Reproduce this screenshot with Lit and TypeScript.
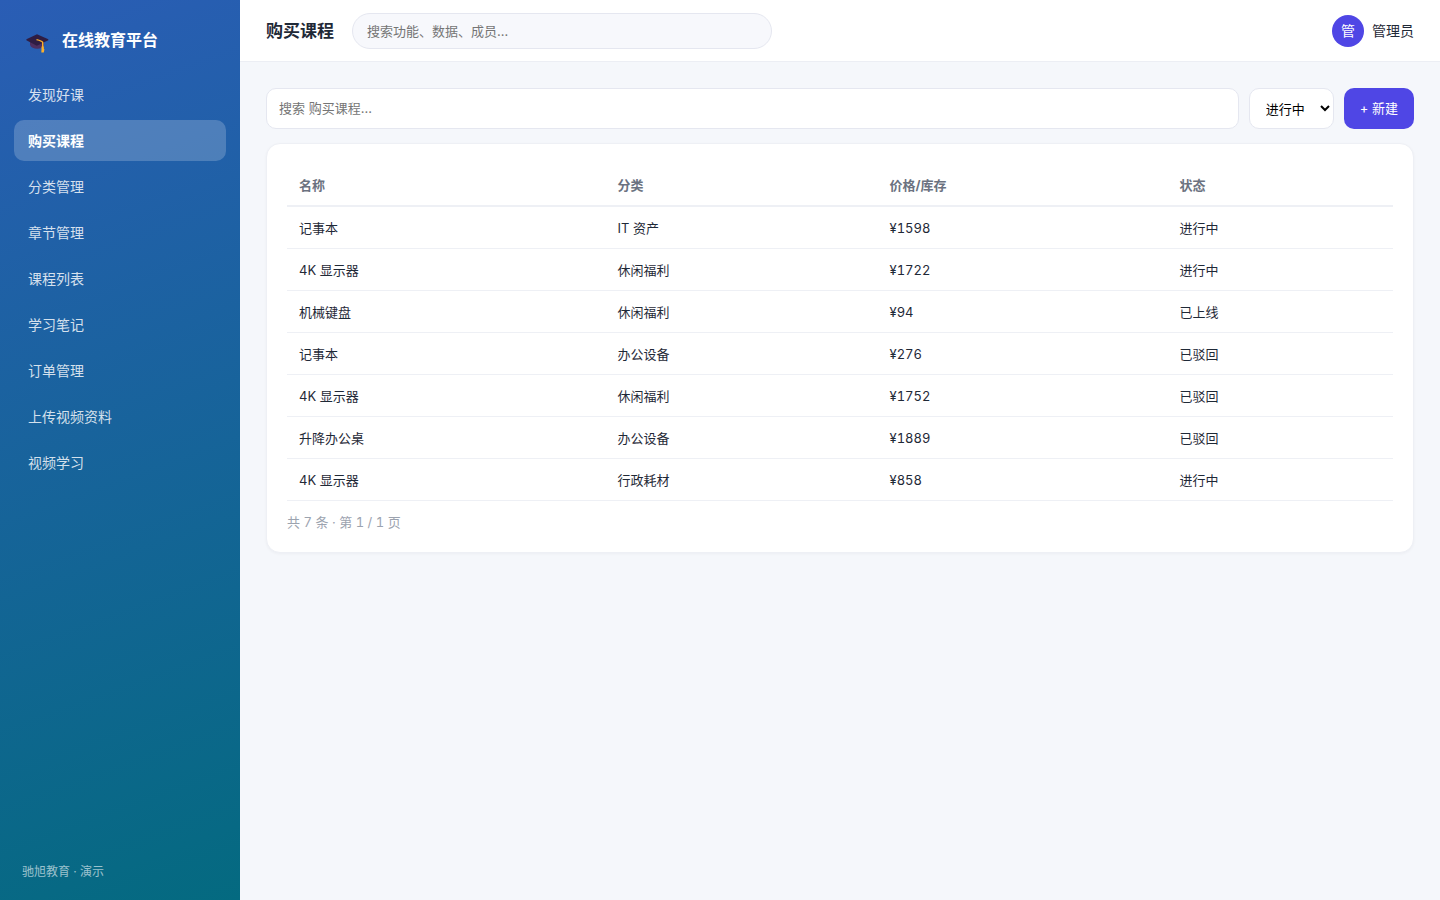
import { LitElement, html, css, svg } from "lit";
import { customElement, state } from "lit/decorators.js";

interface Goods {
  name: string;
  category: string;
  price: number;
  status: string;
}

const MENU = ["发现好课", "购买课程", "分类管理", "章节管理", "课程列表", "学习笔记", "订单管理", "上传视频资料", "视频学习"];

const STATUSES = ["进行中", "已上线", "已驳回"];

const ROWS: Goods[] = [
  { name: "记事本", category: "IT 资产", price: 1598, status: "进行中" },
  { name: "4K 显示器", category: "休闲福利", price: 1722, status: "进行中" },
  { name: "机械键盘", category: "休闲福利", price: 94, status: "已上线" },
  { name: "记事本", category: "办公设备", price: 276, status: "已驳回" },
  { name: "4K 显示器", category: "休闲福利", price: 1752, status: "已驳回" },
  { name: "升降办公桌", category: "办公设备", price: 1889, status: "已驳回" },
  { name: "4K 显示器", category: "行政耗材", price: 858, status: "进行中" },
];

const capIcon = svg`
  <path d="M4 12v5c1 2.500 3.700 3.700 7.200 3.700s6-1.200 6.600-3.700v-5z" fill="#4d2f60"/>
  <path d="M11 6.200.4 11.200v1l10.400 5.600 11.500-5.600v-1z" fill="#2f1d43"/>
  <path d="M10.500 11.600c3.200.7 5.600 1.600 6.200 2.800v6" fill="none" stroke="#fbb02d" stroke-width="1.400"/>
  <path d="M15.500 18.600h2.300v2l.6 1-.6 3h-2.500l.2-3z" fill="#fbb02d"/>
`;

@customElement("app-root")
export class AppRoot extends LitElement {
  @state() private current = "购买课程";

  static styles = css`
    :host {
      display: grid;
      grid-template-columns: 240px minmax(0, 1fr);
      min-height: 100vh;
      background: #f5f7fb;
      color: #1f2937;
      font-family: Inter, "Noto Sans CJK SC", sans-serif;
      font-size: 14px;
      line-height: 21px;
      font-variant-numeric: tabular-nums;
    }
    * {
      box-sizing: border-box;
    }
    input,
    select,
    button {
      font-family: inherit;
      font-size: 13px;
      line-height: 19px;
    }
    .side {
      display: flex;
      flex-direction: column;
      padding: 20px 14px;
      background: linear-gradient(160deg, #2a5db5, #046a80);
      color: #fff;
    }
    .brand {
      display: flex;
      align-items: center;
      gap: 12px;
      padding: 8px 10px 22px 12px;
      font-size: 16px;
      line-height: 24px;
      font-weight: 700;
    }
    .logo {
      width: 24px;
      height: 24px;
      overflow: visible;
    }
    .menu {
      display: flex;
      flex-direction: column;
      gap: 5px;
    }
    .item {
      padding: 10px 14px;
      border-radius: 10px;
      color: rgba(255, 255, 255, 0.82);
      text-decoration: none;
    }
    .item.active {
      background: rgba(255, 255, 255, 0.2);
      color: #fff;
      font-weight: 700;
    }
    .foot {
      margin-top: auto;
      padding: 0 8px;
      font-size: 12px;
      line-height: 16px;
      color: rgba(255, 255, 255, 0.6);
    }
    .top {
      display: flex;
      align-items: center;
      gap: 18px;
      padding: 12px 26px;
      min-height: 62px;
      background: #fff;
      border-bottom: 1px solid #eceef4;
    }
    .title {
      margin: 0;
      font-size: 17px;
      line-height: 26px;
      font-weight: 700;
    }
    .find {
      flex: 0 1 420px;
      min-width: 0;
      height: 36px;
      padding: 0 14px;
      border: 1px solid #e5e7f0;
      border-radius: 18px;
      background: #f7f8fc;
    }
    .user {
      display: flex;
      align-items: center;
      gap: 8px;
      margin-left: auto;
    }
    .avatar {
      display: grid;
      place-items: center;
      width: 32px;
      height: 32px;
      border-radius: 50%;
      background: #4f46e5;
      color: #fff;
    }
    .content {
      display: flex;
      flex-direction: column;
      gap: 14px;
      padding: 26px;
    }
    .bar {
      display: flex;
      gap: 10px;
    }
    .query {
      flex: 1;
      min-width: 0;
      padding: 10px 12px;
      border: 1px solid #e5e7f0;
      border-radius: 10px;
      background: #fff;
    }
    .status {
      padding: 10px 12px;
      width: 85px;
      border: 1px solid #e5e7f0;
      border-radius: 10px;
      background: #fff;
      color: #000;
    }
    .create {
      padding: 11px 16px;
      border: 0;
      border-radius: 10px;
      background: #4f46e5;
      color: #fff;
    }
    .card {
      padding: 20px;
      border: 1px solid #eef0f5;
      border-radius: 14px;
      background: #fff;
      box-shadow: 0 1px 3px rgba(16, 24, 40, 0.04);
    }
    .grid {
      width: 100%;
      border-spacing: 0;
      font-size: 13px;
      line-height: 19px;
      text-align: left;
    }
    .grid th {
      padding: 12px 12px 10px;
      border-bottom: 2px solid #eef0f5;
      color: #6b7280;
      font-weight: 700;
    }
    .grid td {
      padding: 12px 12px 10px;
      border-bottom: 1px solid #eef0f5;
    }
    .pager {
      margin: 0;
      padding-top: 12px;
      font-size: 13px;
      line-height: 19px;
      color: #9ca3af;
    }
  `;

  render() {
    return html`
      <aside class="side">
        <div class="brand">
          <svg class="logo" viewBox="0 0 24 24" aria-hidden="true">${capIcon}</svg>
          <span>在线教育平台</span>
        </div>
        <nav class="menu">
          ${MENU.map(
            (m) => html`<a
              class="item ${m === this.current ? "active" : ""}"
              href="#"
              @click=${(e: Event) => {
                e.preventDefault();
                this.current = m;
              }}
              >${m}</a
            >`
          )}
        </nav>
        <div class="foot">驰旭教育 · 演示</div>
      </aside>
      <div>
        <header class="top">
          <h1 class="title">${this.current}</h1>
          <input class="find" type="search" aria-label="搜索" placeholder="搜索功能、数据、成员…" />
          <div class="user"><span class="avatar">管</span><span>管理员</span></div>
        </header>
        <main class="content">
          <div class="bar">
            <input class="query" type="text" aria-label="搜索${this.current}" placeholder="搜索 ${this.current}..." />
            <select class="status" aria-label="状态">
              ${STATUSES.map((s) => html`<option>${s}</option>`)}
            </select>
            <button class="create" type="button">+ 新建</button>
          </div>
          <section class="card">
            <table class="grid">
              <thead>
                <tr><th>名称</th><th>分类</th><th>价格/库存</th><th>状态</th></tr>
              </thead>
              <tbody>
                ${ROWS.map(
                  (r) => html`<tr><td>${r.name}</td><td>${r.category}</td><td>¥${r.price}</td><td>${r.status}</td></tr>`
                )}
              </tbody>
            </table>
            <p class="pager">共 ${ROWS.length} 条 · 第 1 / 1 页</p>
          </section>
        </main>
      </div>
    `;
  }
}
